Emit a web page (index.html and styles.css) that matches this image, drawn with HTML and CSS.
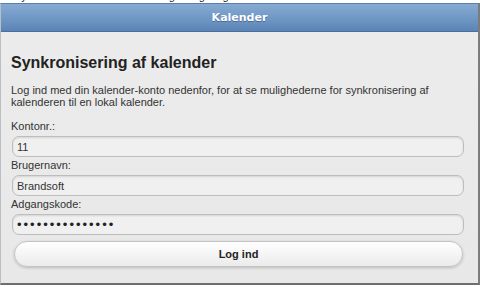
FILE: index.html
```html
<!DOCTYPE html>
<html lang="da">
<head>
  <meta charset="UTF-8">
  <title>Kalender</title>
  <link rel="stylesheet" href="styles.css">
</head>
<body>
  <div class="page-top"><span>Synkroniser din kalender med og Google og</span></div>
  <div class="dialog">
    <div class="dialog-header">Kalender</div>
    <div class="dialog-content">
      <h1>Synkronisering af kalender</h1>
      <p>Log ind med din kalender-konto nedenfor, for at se mulighederne for synkronisering af kalenderen til en lokal kalender.</p>
      <form class="login-form">
        <label for="konto">Kontonr.:</label>
        <input id="konto" type="text" value="11">
        <label for="bruger">Brugernavn:</label>
        <input id="bruger" type="text" value="Brandsoft">
        <label for="kode">Adgangskode:</label>
        <input id="kode" type="password" value="hemmeligkode123">
        <button type="button" class="btn-login">Log ind</button>
      </form>
    </div>
  </div>
</body>
</html>
```

FILE: styles.css
```css
html, body {
  margin: 0;
  padding: 0;
}
body {
  background: #fff;
  font-family: 'Liberation Sans', Arial, sans-serif;
  color: #333;
  width: 480px;
  height: 287px;
  overflow: hidden;
}
/* only the descenders of the line above show */
.page-top {
  height: 3px;
  overflow: hidden;
  font-size: 11px;
  line-height: 12px;
  padding-left: 14px;
  color: #222;
  white-space: nowrap;
}
.page-top span {
  display: block;
  margin-top: -10px;
}
.dialog {
  height: 282px;
  box-sizing: border-box;
  border: 1px solid #8a8a8a;
  border-top-color: #5a7fae;
  border-left-color: #b9bfc7;
  border-right: 2px solid #7c7c7c;
  border-bottom: 2px solid #6e6e6e;
  background: linear-gradient(180deg, #ececec 0%, #e8e8e8 100%);
}
.dialog-header {
  height: 27px;
  line-height: 27px;
  text-align: center;
  color: #fff;
  font-weight: bold;
  font-size: 11px;
  font-family: 'DejaVu Sans', Verdana, sans-serif;
  background: linear-gradient(180deg, #87aad2 0%, #7199c6 50%, #5b84b6 100%);
  border-bottom: 1px solid #4c6f9c;
  text-shadow: 0 1px 0 #4a6a96;
}
.dialog-content {
  padding: 0 14px 0 10px;
}
h1 {
  font-size: 16px;
  font-weight: bold;
  color: #222;
  margin: 22px 0 0 0;
  line-height: 18px;
}
p {
  font-size: 11px;
  line-height: 12px;
  color: #333;
  margin: 12px 0 0 0;
}
.login-form {
  display: flex;
  flex-direction: column;
  margin-top: 12px;
}
.login-form label {
  font-size: 11px;
  line-height: 12px;
  color: #333;
  margin-bottom: 4px;
}
.login-form input {
  font-family: 'Liberation Sans', Arial, sans-serif;
  font-size: 11px;
  color: #333;
  height: 21px;
  box-sizing: border-box;
  border: 1px solid #bdbdbd;
  border-radius: 7px;
  background: #f0f0f0;
  padding: 0 4px;
  margin: 0 0 2px 1px;
  box-shadow: inset 0 1px 2px rgba(0, 0, 0, 0.12);
}
.login-form input[type="password"] {
  font-size: 13px;
  letter-spacing: 2px;
  color: #222;
}
.btn-login {
  margin: 4px 1px 0 3px;
  height: 26px;
  border: 1px solid #c4c4c4;
  border-radius: 13px;
  background: linear-gradient(180deg, #ffffff 0%, #f3f3f3 60%, #ebebeb 100%);
  box-shadow: 0 1px 3px rgba(0, 0, 0, 0.2);
  font-family: 'Liberation Sans', Arial, sans-serif;
  font-size: 11px;
  font-weight: bold;
  color: #222;
}
```
